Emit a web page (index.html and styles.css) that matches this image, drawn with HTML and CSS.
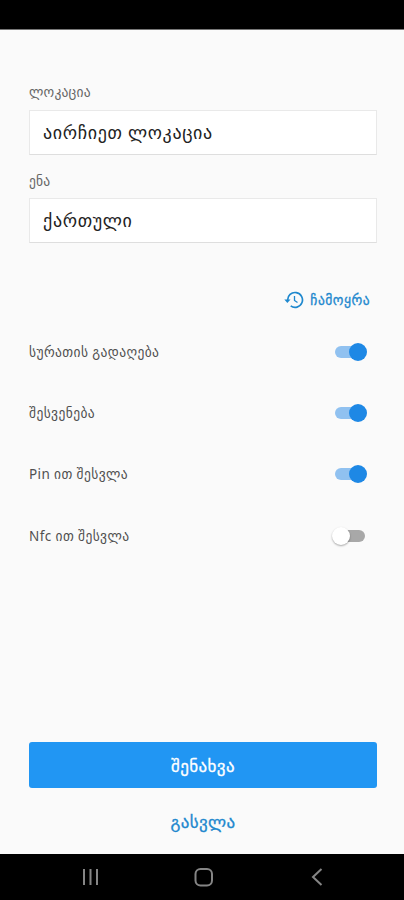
FILE: index.html
```
<!DOCTYPE html>
<html lang="ka">
<head>
<meta charset="utf-8">
<title>პარამეტრები</title>
<link rel="stylesheet" href="styles.css">
</head>
<body>
<div class="status"></div>
<main>
  <div class="label">ლოკაცია</div>
  <div class="field">აირჩიეთ ლოკაცია</div>
  <div class="label second">ენა</div>
  <div class="field">ქართული</div>
  <div class="reset">
    <svg width="20" height="18" viewBox="0 0 20 18"><path d="M3.700 9.500A7.400 7.400 0 1 1 6.700 14.900" fill="none" stroke="currentColor" stroke-width="1.700"/><path d="M.3 8.500H6.500L3.400 12Z" fill="currentColor"/><path d="M10.500 5V9.500L13.500 11.500" fill="none" stroke="currentColor" stroke-width="1.300"/></svg>
    <span>ჩამოყრა</span>
  </div>
  <div class="row"><span>სურათის გადაღება</span><i class="switch on"></i></div>
  <div class="row"><span>შესვენება</span><i class="switch on"></i></div>
  <div class="row"><span>Pin ით შესვლა</span><i class="switch on"></i></div>
  <div class="row"><span>Nfc ით შესვლა</span><i class="switch"></i></div>
  <div class="actions">
    <button class="save">შენახვა</button>
    <button class="exit">გასვლა</button>
  </div>
</main>
<nav>
  <svg width="404" height="46" viewBox="0 0 404 46"><g fill="none" stroke="#858585" stroke-width="2"><path d="M84 15V31M90.500 15V31M97 15V31"/><rect x="195.500" y="15" width="16.500" height="16.500" rx="5"/><path d="M321.500 15L313 23L321.500 31"/></g></svg>
</nav>
</body>
</html>
```
FILE: styles.css
```
* { box-sizing: border-box; }
body { margin: 0; width: 404px; height: 900px; display: flex; flex-direction: column; background: #fafafa; color: #505050; font-family: "Noto Sans", "DejaVu Sans", sans-serif; font-size: 13.5px; overflow: hidden; }
.status { height: 30px; background: #000; border-bottom: 1px solid #777; }
main { flex: 1; display: flex; flex-direction: column; padding: 53px 27px 0 29px; }
.label { height: 18px; line-height: 18px; margin-bottom: 9px; letter-spacing: .2px; color: #666; }
.second { margin-top: 17px; margin-bottom: 8px; }
.field { height: 45px; display: flex; align-items: center; padding: 0 0 2px 13px; background: #fff; border: 1px solid #e9e9e9; border-bottom-color: #dedede; font-size: 18px; letter-spacing: .65px; color: #222; }
.reset { height: 24px; margin-top: 45px; margin-bottom: 9px; padding-right: 7px; display: flex; align-items: center; justify-content: flex-end; gap: 6px; color: #1e88ce; letter-spacing: .5px; -webkit-text-stroke: .3px currentColor; }
.row { height: 61.3px; display: flex; align-items: center; justify-content: space-between; padding-right: 9px; letter-spacing: .4px; }
.switch { position: relative; width: 34px; height: 18px; display: flex; align-items: center; }
.switch::before { content: ""; width: 30px; height: 12px; margin-left: 1px; border-radius: 6px; background: #a8a8a8; }
.switch::after { content: ""; position: absolute; left: -2px; top: 0; width: 18px; height: 18px; border-radius: 50%; background: #fff; box-shadow: 0 1px 2px #0005; }
.on::before { background: #90c1f0; }
.on::after { left: 15px; background: #1e88e5; box-shadow: none; }
.actions { margin-top: auto; display: flex; flex-direction: column; }
button { border: 0; padding: 0; font: inherit; font-size: 17px; letter-spacing: .4px; -webkit-text-stroke: .3px currentColor; }
.save { height: 46px; border-radius: 3px; background: #2196f3; color: #fff; }
.exit { height: 66px; background: none; color: #1e88ce; }
nav { height: 46px; background: #000; }
nav svg { display: block; }
```
